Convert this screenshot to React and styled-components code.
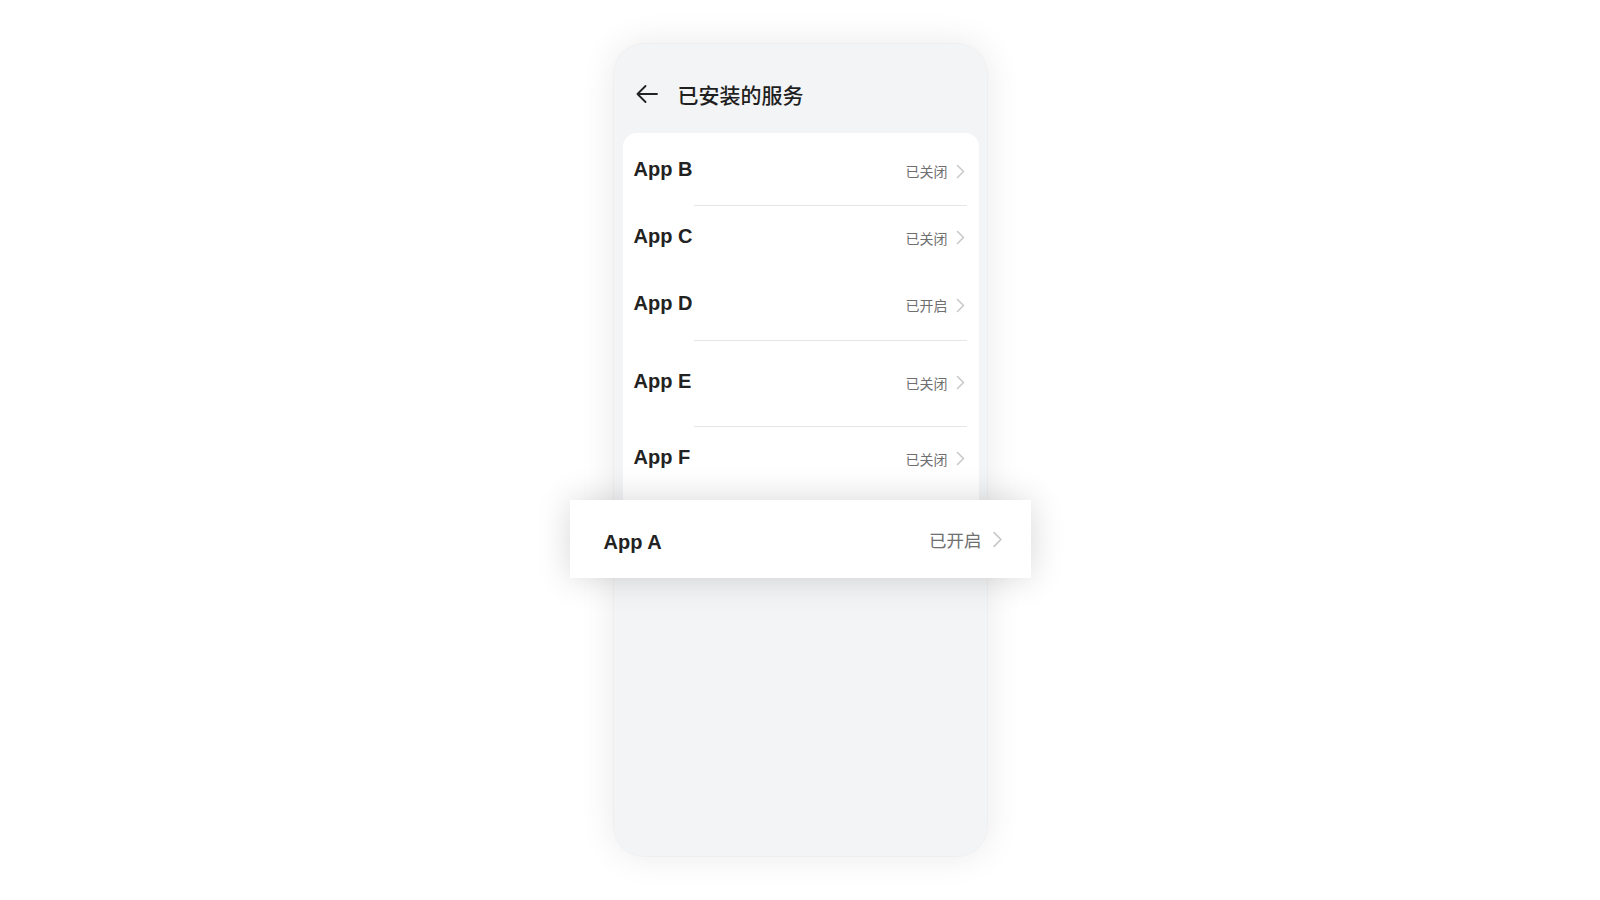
import styled, { createGlobalStyle } from 'styled-components'

const GlobalStyle = createGlobalStyle`
  html, body {
    margin: 0;
    padding: 0;
    background: #ffffff;
  }

  body {
    font-family: "Liberation Sans", "Noto Sans CJK SC", sans-serif;
    color: #222;
  }
`

const Page = styled.main`
  display: flex;
  align-items: center;
  justify-content: center;
  height: 100vh;
`

const Phone = styled.div`
  position: relative;
  width: 373px;
  height: 812px;
  border-radius: 30px;
  background: #f3f4f6;
  box-shadow: 0 0 0 1px rgba(0, 0, 0, 0.025), 0 0 36px rgba(0, 0, 0, 0.09);
  display: flex;
  flex-direction: column;
`

const Header = styled.header`
  display: flex;
  align-items: center;
  gap: 20px;
  height: 40px;
  margin-top: 30px;
  padding-left: 22px;
`

const Title = styled.h1`
  margin: 0;
  font-family: "Noto Sans CJK SC", sans-serif;
  font-size: 21px;
  font-weight: 500;
  color: #1f1f1f;
`

const Card = styled.section`
  margin: 19px 8px 0 9px;
  padding-bottom: 20px;
  background: #ffffff;
  border-radius: 14px 14px 0 0;
`

const Row = styled.div`
  position: relative;
  display: flex;
  align-items: center;
  height: ${(p) => p.$height}px;
  box-sizing: border-box;
  padding: 0 14px ${(p) => p.$lift * 2 || 0}px 11px;

  &::after {
    content: '';
    display: ${(p) => (p.$divider ? 'block' : 'none')};
    position: absolute;
    left: 71px;
    right: 12px;
    bottom: 0;
    height: 1px;
    background: #e6e6e6;
  }
`

const Name = styled.span`
  flex: 1;
  font-family: "Liberation Sans", sans-serif;
  font-size: 20px;
  font-weight: 700;
  color: #222;
  margin-top: ${(p) => p.$offset || 0}px;
`

const Status = styled.span`
  display: flex;
  align-items: center;
  gap: ${(p) => (p.$large ? 10 : 8)}px;
  margin-top: ${(p) => (p.$large ? 0 : 3)}px;
  font-family: "Noto Sans CJK SC", sans-serif;
  font-size: ${(p) => (p.$large ? 17.5 : 14)}px;
  color: #6f6f6f;
`

const Dragged = styled.div`
  position: absolute;
  left: -44px;
  top: 456px;
  width: 461px;
  height: 78px;
  box-sizing: border-box;
  display: flex;
  align-items: center;
  padding: 0 28px 0 34px;
  background: #ffffff;
  box-shadow: 0 0 34px rgba(0, 0, 0, 0.16);
`

const BackArrow = () => (
  <svg width="22" height="18" viewBox="0 0 22 18" fill="none">
    <path
      d="M21 9H1.5M9.5 1L1.5 9L9.5 17"
      stroke="#222"
      strokeWidth="1.8"
      strokeLinecap="round"
      strokeLinejoin="round"
    />
  </svg>
)

const Chevron = ({ large }) => (
  <svg
    width={large ? 11 : 9}
    height={large ? 17 : 15}
    viewBox="0 0 9 15"
    fill="none"
  >
    <path
      d="M1.5 1.5L7.5 7.5L1.5 13.5"
      stroke="#c8c8c8"
      strokeWidth="1.5"
      strokeLinecap="round"
      strokeLinejoin="round"
    />
  </svg>
)

// rows are caught mid-reorder, so their heights are not even
const apps = [
  { name: 'App B', status: '已关闭', height: 73, lift: 0, divider: true },
  { name: 'App C', status: '已关闭', height: 64, lift: 2, divider: false },
  { name: 'App D', status: '已开启', height: 71, lift: 2, divider: true },
  { name: 'App E', status: '已关闭', height: 86, lift: 3, divider: true },
  { name: 'App F', status: '已关闭', height: 62, lift: 1, divider: false },
]

const App = () => {
  return (
    <>
      <GlobalStyle />
      <Page>
        <Phone>
          <Header>
            <BackArrow />
            <Title>已安装的服务</Title>
          </Header>
          <Card>
            {apps.map((app) => (
              <Row
                key={app.name}
                $height={app.height}
                $lift={app.lift}
                $divider={app.divider}
              >
                <Name>{app.name}</Name>
                <Status>
                  {app.status}
                  <Chevron />
                </Status>
              </Row>
            ))}
          </Card>
          <Dragged>
            <Name $offset={7}>App A</Name>
            <Status $large>
              已开启
              <Chevron large />
            </Status>
          </Dragged>
        </Phone>
      </Page>
    </>
  )
}

export default App
